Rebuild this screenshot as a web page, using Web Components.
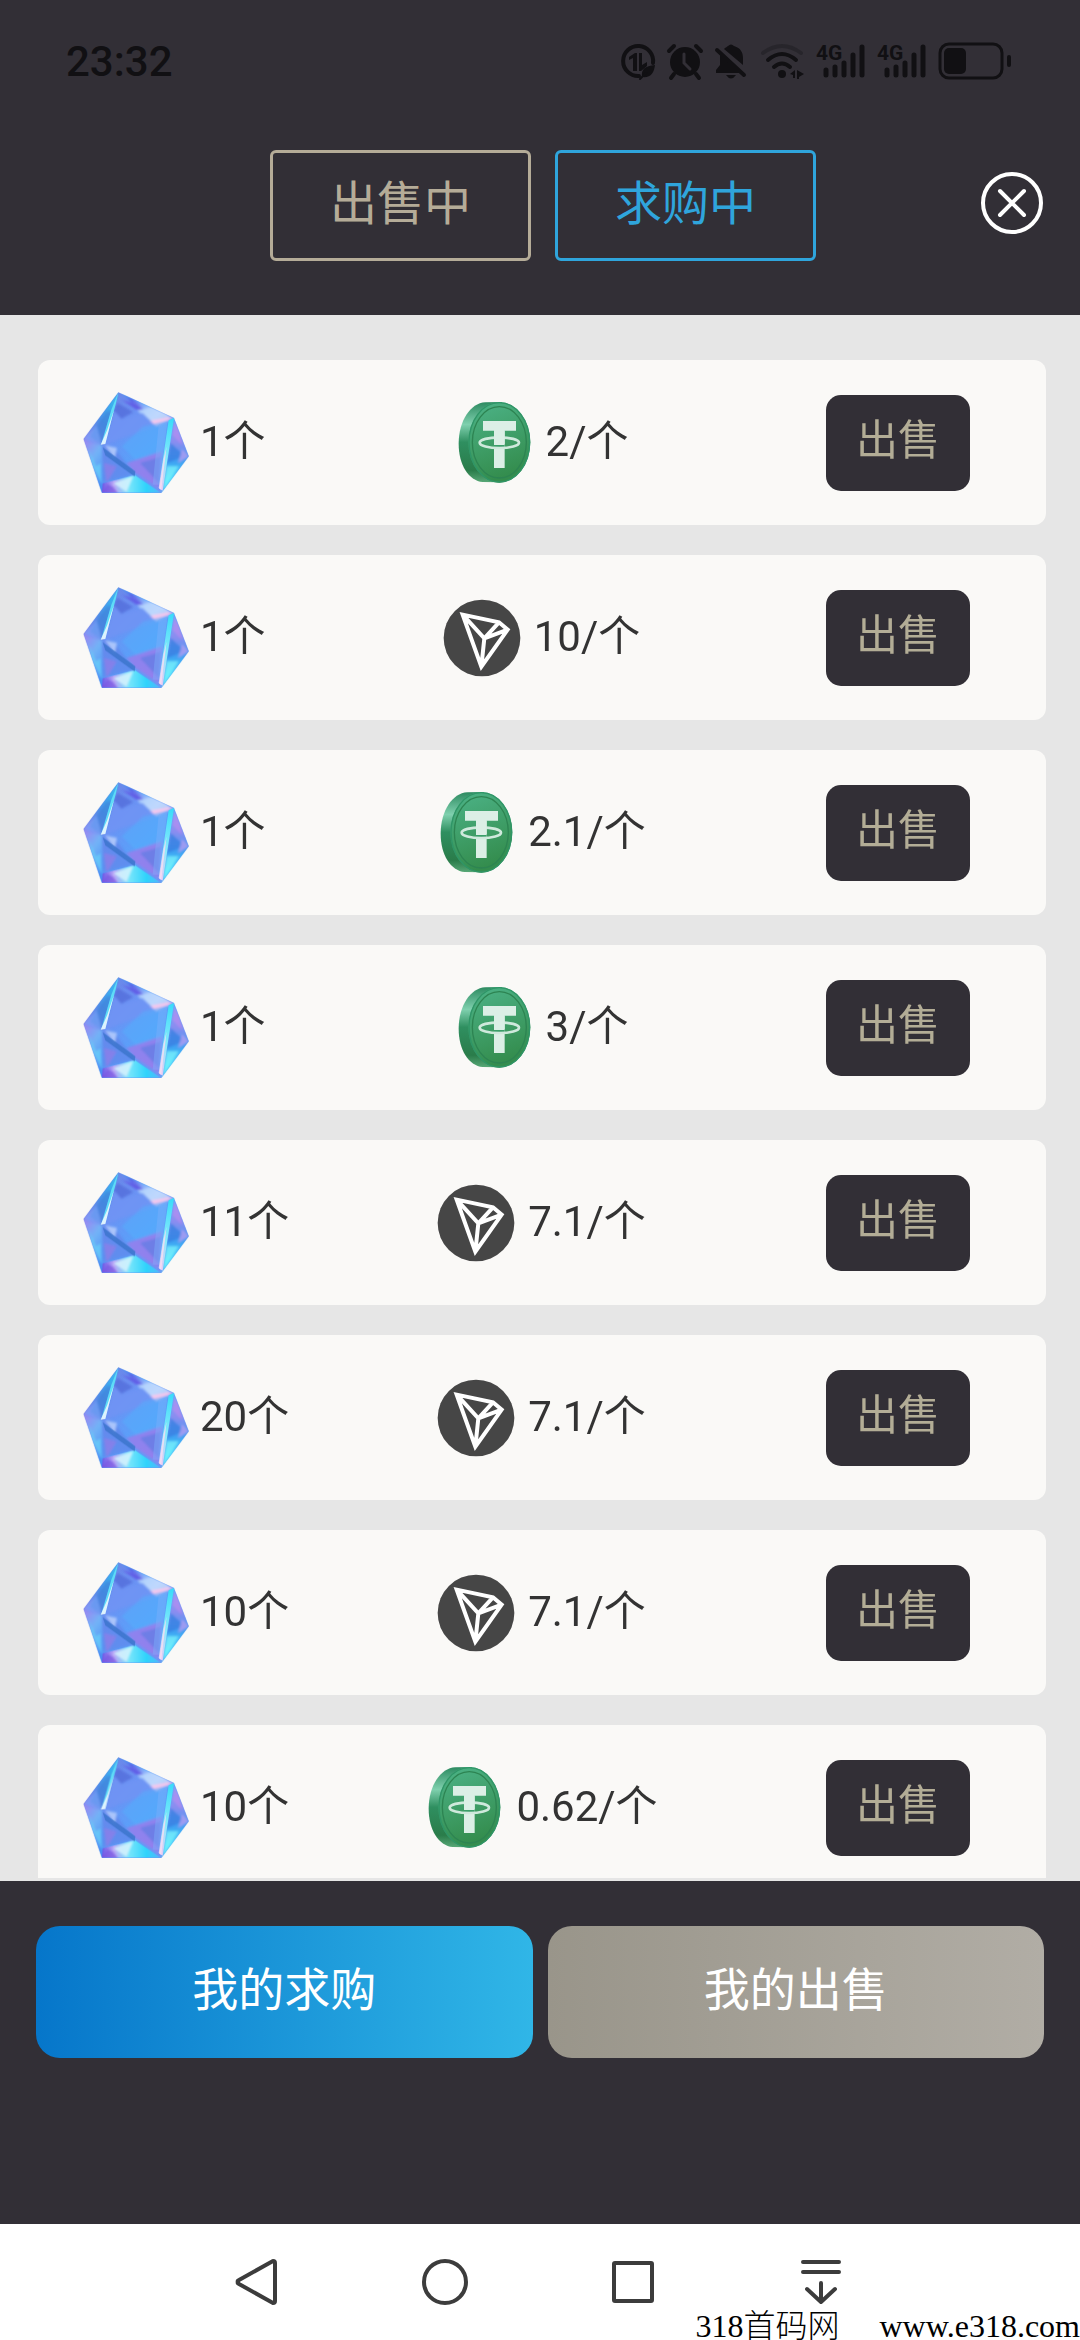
<!DOCTYPE html>
<html lang="zh-CN">
<head>
<meta charset="utf-8">
<meta name="viewport" content="width=device-width, initial-scale=1">
<title>求购中</title>
<style>
  html, body {
    margin: 0;
    height: 100%;
  }

  body {
    background: #322f36;
    font-family: Roboto, "Noto Sans CJK SC", sans-serif;
    overflow: hidden;
  }
</style>
</head>
<body>
<market-app></market-app>

<template id="status-bar">
  <style>
    :host {
      display: flex;
      align-items: center;
      justify-content: space-between;
      height: 120px;
      padding: 0 68px 0 66px;
      color: #111013;
      font-size: 42px;
      font-weight: 500;
      line-height: 52px;
    }

    time {
      padding-top: 4px;
    }

    .icons {
      display: flex;
      align-items: center;
      gap: 10px;
      padding-top: 2px;
    }

    svg {
      display: block;
      height: 40px;
      fill: currentColor;
    }

    text {
      font: 700 21px Roboto, sans-serif;
    }

    .line {
      fill: none;
      stroke: currentColor;
      stroke-linecap: round;
    }
  </style>
  <time>23:32</time>
  <div class="icons">
    <svg width="36" viewBox="0 0 36 40" aria-label="省流量">
      <path class="line" stroke-width="4" d="M33 22A15 15 0 1 0 19 35"/>
      <path d="M9 16l6-4h2v18h-4V17l-4 2zM19 12h3v12l5-3v4l-6 5h-2zM22 36c-1-8 3-11 13-12-1 8-4 13-13 12z"/>
      <path class="line" stroke-width="2" d="M20 38l6-6"/>
    </svg>
    <svg width="38" viewBox="0 0 38 40" aria-label="闹钟">
      <circle cx="19" cy="21" r="15"/>
      <path class="line" stroke-width="4" d="M3 10l5-5M35 10l-5-5M8 33l-3 4M30 33l3 4"/>
      <path fill="none" stroke="#322f36" stroke-width="3" stroke-linecap="round" d="M18 13v9l6 6"/>
    </svg>
    <svg width="34" viewBox="0 0 34 40" aria-label="静音">
      <path d="M10 8c2-2 3-2 4-3q3-3 6 0c7 2 9 7 9 12v7zM6 13l21 19H2v-3l4-5zM12 34h10q-5 7-10 0z"/>
      <path class="line" stroke-width="4" d="M3 9l27 25"/>
    </svg>
    <svg width="48" viewBox="0 0 48 40" aria-label="无线网络">
      <path class="line" stroke-width="4" opacity=".3" d="M5 12q19-14 38 0"/>
      <path class="line" stroke-width="4" d="M10 19q14-12 28 0M16 26q8-7 16 0"/>
      <circle cx="24" cy="33" r="4"/>
      <path d="M32 33l5-4v8h-2v-3zM39 29l7 4-5 3v2h-2z"/>
    </svg>
    <svg width="51" viewBox="0 0 51 40" aria-label="信号">
      <text x="0" y="19">4G</text>
      <path class="line" stroke-width="5" d="M10 29v5M19 26v8M28 22v12M37 14v20M46 6v28"/>
    </svg>
    <svg width="51" viewBox="0 0 51 40" aria-label="信号">
      <text x="0" y="19">4G</text>
      <path class="line" stroke-width="5" d="M10 29v5M19 26v8M28 22v12M37 14v20M46 6v28"/>
    </svg>
    <svg width="74" viewBox="0 0 74 40" aria-label="电量">
      <rect class="line" x="2" y="3" width="62" height="34" rx="9" stroke-width="3"/>
      <rect x="6" y="7" width="22" height="26" rx="5"/>
      <rect x="69" y="14" width="4" height="12" rx="2"/>
    </svg>
  </div>
</template>

<template id="tab-header">
  <style>
    :host {
      display: grid;
      grid-template-columns: 1fr auto 1fr;
      align-items: center;
      padding: 30px 36px 54px 42px;
    }

    nav {
      grid-column: 2;
      display: flex;
      gap: 24px;
    }

    .tab {
      box-sizing: border-box;
      width: 261px;
      height: 111px;
      padding: 0 0 4px;
      border: 3px solid currentColor;
      border-radius: 6px;
      background: none;
      color: #b5ac98;
      font: inherit;
      font-size: 47px;
      line-height: 56px;
    }

    .tab[aria-pressed="true"] {
      color: #2fa5dc;
    }

    .close {
      justify-self: end;
      padding: 0 0 6px;
      border: 0;
      background: none;
    }

    svg {
      display: block;
      fill: none;
      stroke: #fff;
      stroke-width: 4;
      stroke-linecap: round;
    }
  </style>
  <nav>
    <button class="tab" aria-pressed="false">出售中</button>
    <button class="tab" aria-pressed="true">求购中</button>
  </nav>
  <button class="close" aria-label="关闭">
    <svg width="64" height="64" viewBox="0 0 64 64">
      <circle cx="32" cy="32" r="29"/>
      <path d="M20 20l24 24M44 20L20 44"/>
    </svg>
  </button>
</template>

<template id="crystal-icon">
  <style>
    :host,
    svg {
      display: block;
    }
  </style>
  <svg width="112" height="112" viewBox="0 0 336 336" aria-hidden="true">
    <defs>
      <linearGradient id="core" x1="0" y1="0" x2="1" y2="1">
        <stop offset="0" stop-color="#6a7fe0"/>
        <stop offset=".35" stop-color="#6b93f4"/>
        <stop offset=".6" stop-color="#58a2fa"/>
        <stop offset="1" stop-color="#7d8cf0"/>
      </linearGradient>
      <linearGradient id="top" x1="0" y1="0" x2="1" y2=".6">
        <stop offset="0" stop-color="#2fb0f5"/>
        <stop offset=".3" stop-color="#5b63e8"/>
        <stop offset=".55" stop-color="#8fb4fb"/>
        <stop offset=".8" stop-color="#e3d3fb"/>
        <stop offset="1" stop-color="#8fa5f5"/>
      </linearGradient>
      <linearGradient id="left" x1="1" y1="0" x2="0" y2="1">
        <stop offset="0" stop-color="#2ec8f3"/>
        <stop offset=".5" stop-color="#4a8fe6"/>
        <stop offset="1" stop-color="#a583f0"/>
      </linearGradient>
      <linearGradient id="low" x1="0" y1="0" x2=".6" y2="1">
        <stop offset="0" stop-color="#a77bf0"/>
        <stop offset=".5" stop-color="#72b3f7"/>
        <stop offset="1" stop-color="#4b8bf2"/>
      </linearGradient>
      <linearGradient id="base" x1="0" y1="0" x2="1" y2="0">
        <stop offset="0" stop-color="#6a58e6"/>
        <stop offset=".2" stop-color="#b9a5f6"/>
        <stop offset=".45" stop-color="#7ae6fb"/>
        <stop offset=".75" stop-color="#2fd3fb"/>
        <stop offset="1" stop-color="#55b5fa"/>
      </linearGradient>
      <linearGradient id="right" x1="0" y1="0" x2="0" y2="1">
        <stop offset="0" stop-color="#62b4f8"/>
        <stop offset=".3" stop-color="#8d8cf0"/>
        <stop offset=".55" stop-color="#3f9df2"/>
        <stop offset=".8" stop-color="#46e2fb"/>
        <stop offset="1" stop-color="#5ecbfb"/>
      </linearGradient>
      <linearGradient id="shine" x1="0" y1="0" x2="0" y2="1">
        <stop offset="0" stop-color="#37dcf8"/>
        <stop offset=".6" stop-color="#8deafc"/>
        <stop offset="1" stop-color="#e6c8f5"/>
      </linearGradient>
      <!-- blends the inner facets, the outline stays sharp -->
      <filter id="blend"><feGaussianBlur stdDeviation="3"/></filter>
      <clipPath id="outline"><path d="M115 13L282 90L326 205L244 315H66L11 153z"/></clipPath>
    </defs>
    <path fill="url(#core)" d="M115 13L282 90L326 205L244 315H66L11 153z"/>
    <g clip-path="url(#outline)">
      <g filter="url(#blend)">
        <path fill="url(#left)" d="M115 13L66 172L0 153z"/>
        <path fill="#3f7fd8" opacity=".55" d="M80 70L98 68L66 172L30 145z"/>
        <path fill="#79a6fb" opacity=".6" d="M11 153L50 112L66 172z"/>
        <path fill="url(#low)" d="M0 153L66 172L70 320H60z"/>
        <path fill="#68d3fa" opacity=".7" d="M24 180L48 235L62 225L66 290L40 238z"/>
        <path fill="url(#top)" d="M115 5L290 88L229 115z"/>
        <path fill="#5f52e2" opacity=".8" d="M125 35L172 50L195 68L168 64z"/>
        <path fill="#5ccdfb" opacity=".8" d="M115 8L200 40L244 68L186 47z"/>
        <path fill="#b9d8fd" opacity=".85" d="M172 68L222 55L270 87L210 98z"/>
        <path fill="#f8c8ec" d="M206 100L262 88L278 90L229 115z"/>
        <path fill="#4c63d4" opacity=".6" d="M112 45L160 72L124 93L101 67z"/>
        <path fill="#6f94f4" opacity=".8" d="M104 70L125 94L188 75L229 115L115 155L75 172z"/>
        <path fill="#56abfb" opacity=".6" d="M190 115L260 98L245 195L170 218L125 175z"/>
        <path fill="#6284e9" opacity=".7" d="M66 172L104 182L165 258L70 285z"/>
        <path fill="#a078ea" opacity=".75" d="M140 225L245 190L235 300L165 255z"/>
        <path fill="#637de3" opacity=".75" d="M180 225L242 207L236 285z"/>
        <path fill="#9d7ae8" opacity=".6" d="M72 225L110 235L80 285z"/>
        <path fill="#bdd3fc" opacity=".8" d="M75 172L111 180L104 210z"/>
      </g>
      <path fill="url(#base)" d="M66 315L68 286L165 262L244 315z"/>
      <path fill="#3974ca" opacity=".8" d="M68 178L166 250L164 266L76 202z"/>
      <g filter="url(#blend)">
        <path fill="#d6f3fd" opacity=".85" d="M100 286L160 264L140 312z"/>
        <path fill="#7957e0" opacity=".75" d="M60 320L82 289L100 298L115 318z"/>
        <path fill="url(#right)" d="M282 90L335 205L244 322z"/>
        <path fill="#b18cf0" opacity=".8" d="M283 100L298 125L306 170L276 140z"/>
        <path fill="#377fe0" opacity=".75" d="M272 165L313 203L262 225z"/>
        <path fill="#b39df3" opacity=".8" d="M306 183L326 205L294 226z"/>
        <path fill="#7ff3fc" opacity=".7" d="M260 235L296 235L250 305z"/>
      </g>
      <path fill="#7cb0fb" opacity=".45" d="M236 112L262 103L238 290H218z"/>
      <path fill="url(#shine)" d="M266 97L282 90L248 308L236 300z"/>
      <path fill="#fbdcf2" opacity=".8" d="M250 215L260 175L244 306L238 302z"/>
      <path fill="#5edcf7" d="M115 13L108 45L76 165L64 168L94 65z"/>
      <path fill="#ecf5fe" opacity=".9" d="M102 65L76 168L62 170L82 125z"/>
    </g>
  </svg>
</template>

<template id="coin-icon">
  <style>
    :host,
    svg {
      display: block;
    }

    svg {
      overflow: visible;
    }

    :host([kind="usdt"]) .tron,
    :host([kind="tron"]) .usdt {
      display: none;
    }
  </style>
  <svg class="usdt" width="80" height="80" viewBox="12 20 240 240" aria-label="USDT">
    <defs>
      <linearGradient id="edge" x1="0" y1="0" x2="0" y2="1">
        <stop offset="0" stop-color="#2c8a60"/>
        <stop offset=".28" stop-color="#7fd0ae"/>
        <stop offset=".5" stop-color="#2f8f60"/>
        <stop offset=".85" stop-color="#2a7c4a"/>
        <stop offset="1" stop-color="#58a877"/>
      </linearGradient>
      <linearGradient id="face" x1="0" y1="0" x2=".3" y2="1">
        <stop offset="0" stop-color="#4db489"/>
        <stop offset="1" stop-color="#348d4e"/>
      </linearGradient>
    </defs>
    <path fill="url(#edge)" d="M100 18C55 20 20 75 20 142C20 205 50 253 92 257L140 258L150 17z"/>
    <ellipse cx="142" cy="138" rx="93" ry="121" fill="url(#face)"/>
    <ellipse cx="142" cy="138" rx="91" ry="119" fill="none" stroke="#2f9567" stroke-width="4"/>
    <ellipse cx="142" cy="138" rx="81" ry="107" fill="none" stroke="#2d8452" stroke-width="4"/>
    <path fill="#dcefe6" d="M93 74H192V103H158V215H126V103H93z"/>
    <path fill="#3b9e69" d="M126 146H158V157H126z"/>
    <ellipse cx="142" cy="139" rx="59" ry="16" fill="none" stroke="#cfe9dc" stroke-width="8"/>
    <path fill="#dcefe6" d="M126 103H158V143H126z"/>
  </svg>
  <svg class="tron" width="80" height="80" viewBox="0 0 240 240" aria-label="TRX">
    <circle cx="114" cy="120" r="115" fill="#464646"/>
    <path fill="none" stroke="#fff" stroke-width="12" stroke-linejoin="miter" d="M56 50L165 73L191 95L112 206zM56 50L121 121L165 73M121 121L191 95M121 121L112 206"/>
  </svg>
</template>

<template id="order-row">
  <style>
    :host {
      display: grid;
      grid-template-columns: 1fr auto 1fr;
      align-items: center;
      flex: none;
      height: 165px;
      padding: 0 42px;
      border-radius: 12px;
      background: #faf9f7;
      color: #333;
      font-size: 42px;
      line-height: 50px;
    }

    .amount,
    .price {
      display: flex;
      align-items: center;
      gap: 8px;
    }

    .price {
      gap: 10px;
    }

    crystal-icon {
      padding-top: 2px;
    }

    .text {
      padding-bottom: 2px;
    }

    button {
      justify-self: end;
      width: 144px;
      height: 96px;
      margin-right: 34px;
      padding: 0 0 4px;
      border: 0;
      border-radius: 15px;
      background: #322f36;
      color: #b3ad96;
      font: inherit;
    }
  </style>
  <div class="amount">
    <crystal-icon></crystal-icon>
    <span class="text"><slot name="amount"></slot></span>
  </div>
  <div class="price">
    <coin-icon></coin-icon>
    <span class="text"><slot name="price"></slot></span>
  </div>
  <button>出售</button>
</template>

<template id="action-bar">
  <style>
    :host {
      display: flex;
      gap: 15px;
      padding: 45px 36px 166px;
    }

    button {
      flex: 1;
      height: 132px;
      padding: 0 0 4px;
      border: 0;
      border-radius: 24px;
      background: linear-gradient(90deg, #0676ca, #30b6e7);
      color: #fff;
      font: inherit;
      font-size: 46px;
      line-height: 56px;
    }

    .sell {
      background: linear-gradient(90deg, #99958a, #b1ada5);
    }
  </style>
  <button>我的求购</button>
  <button class="sell">我的出售</button>
</template>

<template id="system-nav">
  <style>
    :host {
      position: relative;
      display: flex;
      justify-content: center;
      gap: 140px;
      height: 82px;
      padding: 34px 2px 0 0;
      background: #fff;
    }

    button {
      width: 48px;
      height: 48px;
      padding: 0;
      border: 0;
      background: none;
    }

    svg {
      display: block;
      fill: none;
      stroke: #3c3c3c;
      stroke-width: 4;
      stroke-linecap: round;
      stroke-linejoin: round;
    }

    /* the site mark lies over the corner of the bar */
    .mark {
      position: absolute;
      right: 0;
      bottom: 0;
      display: flex;
      gap: 40px;
      color: #000;
      font-family: "Liberation Serif", "Noto Sans CJK SC", serif;
      font-size: 32px;
      font-weight: 300;
      line-height: 28px;
    }
  </style>
  <button aria-label="返回">
    <svg width="48" height="48" viewBox="0 0 48 48"><path d="M5 24Q4 23 6 22L40 3Q42 3 42 5V43Q42 45 40 45L6 26Q4 25 5 24z"/></svg>
  </button>
  <button aria-label="主页">
    <svg width="48" height="48" viewBox="0 0 48 48"><circle cx="24" cy="24" r="21"/></svg>
  </button>
  <button aria-label="最近任务">
    <svg width="48" height="48" viewBox="0 0 48 48"><rect x="5" y="5" width="38" height="38" rx="1"/></svg>
  </button>
  <button aria-label="收起">
    <svg width="48" height="48" viewBox="0 0 48 48"><path d="M6 4H42M6 14H42M24 25V44M10 31L24 44L38 31"/></svg>
  </button>
  <div class="mark"><span>318首码网</span><span>www.e318.com</span></div>
</template>

<template id="market-app">
  <style>
    :host {
      display: flex;
      flex-direction: column;
      height: 100vh;
    }

    main {
      display: flex;
      flex-direction: column;
      flex: 1;
      gap: 30px;
      min-height: 0;
      padding: 45px 34px 0 38px;
      border-bottom: 3px solid #e6e6e6;
      background: #e6e6e6;
      overflow: hidden;
    }
  </style>
  <status-bar></status-bar>
  <tab-header></tab-header>
  <main></main>
  <action-bar></action-bar>
  <system-nav></system-nav>
</template>

<script>
  /** Open buy orders: amount, coin, unit price. */
  const ORDERS = [
    { amount: '1个', coin: 'usdt', price: '2/个' },
    { amount: '1个', coin: 'tron', price: '10/个' },
    { amount: '1个', coin: 'usdt', price: '2.1/个' },
    { amount: '1个', coin: 'usdt', price: '3/个' },
    { amount: '11个', coin: 'tron', price: '7.1/个' },
    { amount: '20个', coin: 'tron', price: '7.1/个' },
    { amount: '10个', coin: 'tron', price: '7.1/个' },
    { amount: '10个', coin: 'usdt', price: '0.62/个' }
  ];

  /** Base element: clones the template whose id is the tag name. */
  class TemplateElement extends HTMLElement {
    constructor() {
      super();
      this.attachShadow({ mode: 'open' });
      const template = document.getElementById(this.localName);
      this.shadowRoot.appendChild(template.content.cloneNode(true));
    }
  }

  class StatusBar extends TemplateElement {}
  class CrystalIcon extends TemplateElement {}
  class CoinIcon extends TemplateElement {}
  class ActionBar extends TemplateElement {}
  class SystemNav extends TemplateElement {}

  class TabHeader extends TemplateElement {
    connectedCallback() {
      const tabs = this.shadowRoot.querySelectorAll('.tab');
      tabs.forEach(tab => tab.addEventListener('click', () => {
        tabs.forEach(t => t.setAttribute('aria-pressed', String(t === tab)));
      }));
    }
  }

  class OrderRow extends TemplateElement {
    static get observedAttributes() {
      return ['coin'];
    }

    attributeChangedCallback(name, oldValue, newValue) {
      this.shadowRoot.querySelector('coin-icon').setAttribute('kind', newValue);
    }
  }

  class MarketApp extends TemplateElement {
    connectedCallback() {
      const list = this.shadowRoot.querySelector('main');
      ORDERS.forEach(order => {
        const row = document.createElement('order-row');
        row.setAttribute('coin', order.coin);
        row.innerHTML = `<span slot="amount">${order.amount}</span><span slot="price">${order.price}</span>`;
        list.appendChild(row);
      });
    }
  }

  customElements.define('status-bar', StatusBar);
  customElements.define('tab-header', TabHeader);
  customElements.define('crystal-icon', CrystalIcon);
  customElements.define('coin-icon', CoinIcon);
  customElements.define('order-row', OrderRow);
  customElements.define('action-bar', ActionBar);
  customElements.define('system-nav', SystemNav);
  customElements.define('market-app', MarketApp);
</script>
</body>
</html>
